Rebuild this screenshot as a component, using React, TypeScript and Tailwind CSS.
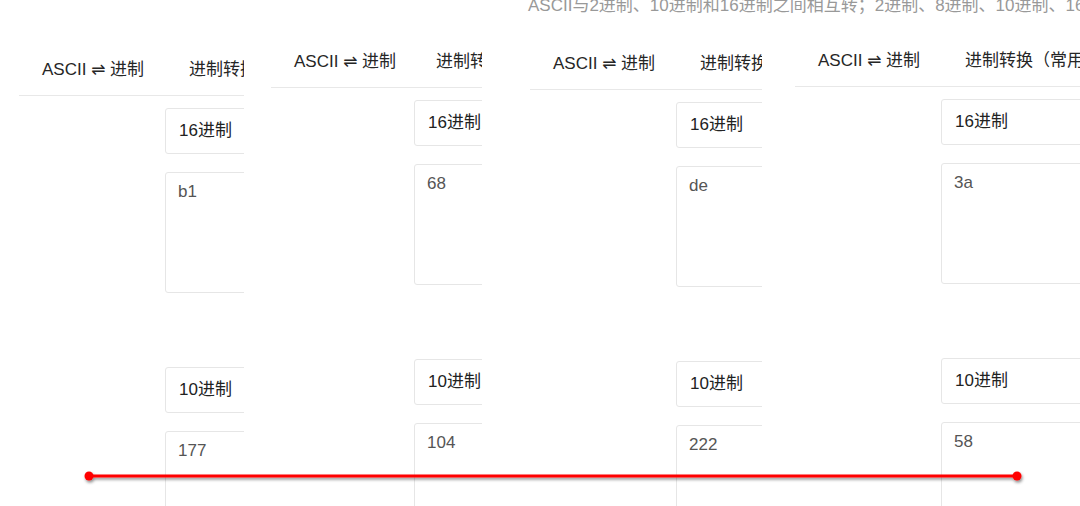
const FONT = { fontFamily: '"Liberation Sans", Arial, "Noto Sans CJK SC", sans-serif' };

type PanelProps = {
  frame: string; // position + width of the crop
  head: string; // header height
  gap: string; // space between the two tabs
  box: string; // left inset of the form boxes
  hex: string;
  dec: string;
};

// one cropped window of the converter page
function Panel({ frame, head, gap, box, hex, dec }: PanelProps) {
  return (
    <div className={`absolute top-0 h-full overflow-hidden bg-white ${frame}`}>
      <div
        className={`flex items-end border-b border-[#e8e8e8] pl-[23px] pb-[13px] text-[17px] leading-[24px] text-[#262626] whitespace-nowrap ${head}`}
      >
        <span>
          ASCII <span className="font-['DejaVu_Sans',sans-serif]">⇌</span> 进制
        </span>
        <span className={gap}>进制转换（常用进制）</span>
      </div>
      <div className={`flex flex-col pt-[12px] ${box}`}>
        <Select label="16进制" />
        <Area value={hex} />
        <div className="h-[74px]" />
        <Select label="10进制" />
        <Area value={dec} />
      </div>
    </div>
  );
}

function Select({ label }: { label: string }) {
  return (
    <div className="flex h-[46px] w-[400px] shrink-0 items-center rounded-[3px] border border-[#e6e6e6] pl-[13px] text-[17px] text-[#222]">
      {label}
    </div>
  );
}

function Area({ value }: { value: string }) {
  return (
    <div className="mt-[18px] h-[121px] w-[400px] shrink-0 rounded-[3px] border border-[#e6e6e6] px-[12px] pt-[7px] text-[17px] leading-[24px] text-[#555]">
      {value}
    </div>
  );
}

export default function App() {
  return (
    <div className="relative h-[506px] w-[1080px] overflow-hidden bg-white" style={FONT}>
      <Panel frame="left-[19px] w-[225px]" head="h-[96px]" gap="ml-[45px]" box="pl-[146px]" hex="b1" dec="177" />
      <Panel frame="left-[271px] w-[211px]" head="h-[88px]" gap="ml-[40px]" box="pl-[143px]" hex="68" dec="104" />
      <Panel frame="left-[530px] w-[232px]" head="h-[90px]" gap="ml-[45px]" box="pl-[146px]" hex="de" dec="222" />
      <Panel frame="left-[795px] w-[285px]" head="h-[87px]" gap="ml-[45px]" box="pl-[146px]" hex="3a" dec="58" />

      <div className="absolute left-[528px] top-[-6px] whitespace-nowrap text-[17px] leading-[24px] text-[#999]">
        ASCII与2进制、10进制和16进制之间相互转；2进制、8进制、10进制、16进制之间相互转换
      </div>

      <svg className="absolute left-0 top-0" width="1080" height="506">
        <defs>
          <filter id="sh" x="-5%" y="-200%" width="110%" height="500%">
            <feDropShadow dx="1" dy="2" stdDeviation="1.6" floodColor="#000" floodOpacity="0.45" />
          </filter>
        </defs>
        <g filter="url(#sh)">
          <line x1="89" y1="476" x2="1017" y2="476" stroke="#ff0000" strokeWidth="3" />
          <circle cx="89" cy="476" r="4.5" fill="#ff0000" />
          <circle cx="1017" cy="476" r="4.5" fill="#ff0000" />
        </g>
      </svg>
    </div>
  );
}
